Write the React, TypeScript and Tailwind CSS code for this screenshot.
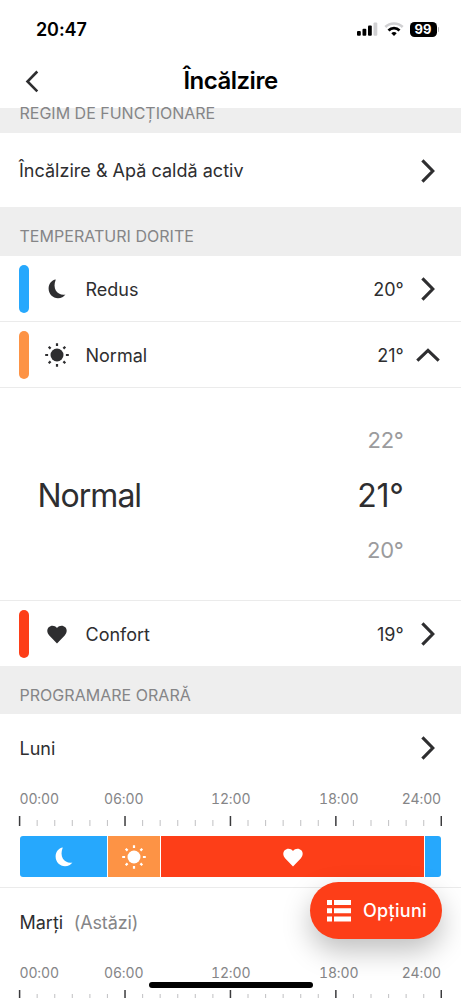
import React from 'react';
import clsx from 'clsx';

type Mode = 'redus' | 'normal' | 'confort';

const MODE_COLORS: Record<Mode, string> = {
  redus: 'bg-[#26a8fd]',
  normal: 'bg-[#fd9345]',
  confort: 'bg-[#fd3e18]',
};

const HOURS = Array.from({ length: 25 }, (_, i) => i);

const SCHEDULE: { mode: Mode; width: string; icon: boolean }[] = [
  { mode: 'redus', width: 'w-[87px]', icon: true },
  { mode: 'normal', width: 'w-[52px]', icon: true },
  { mode: 'confort', width: 'w-[263px]', icon: true },
  { mode: 'redus', width: 'flex-1', icon: false },
];

function ModeIcon({ mode }: { mode: Mode }) {
  if (mode === 'redus') {
    return (
      <svg width="24" height="24" viewBox="0 0 24 24" fill="currentColor">
        <path d="M10.800 2.600C6.500 3.200 3.600 7 3.600 11.600c0 5.400 4.200 9.700 9.400 9.700 3.200 0 5.900-1.300 7.400-3.700C13 19 6.800 12.300 10.800 2.600z" />
      </svg>
    );
  }
  if (mode === 'normal') {
    return (
      <svg width="24" height="24" viewBox="0 0 24 24" fill="currentColor">
        <circle cx="12" cy="12" r="6.500" />
        <g stroke="currentColor" strokeWidth="2.200">
          <path d="M12 .2v2.900M12 20.900v2.900M.2 12h2.900M20.900 12h2.900M3.700 3.700l1.900 1.900M18.400 18.400l1.900 1.900M3.700 20.300l1.900-1.900M18.400 5.600l1.900-1.900" />
        </g>
      </svg>
    );
  }
  return (
    <svg width="24" height="24" viewBox="0 0 24 24" fill="currentColor">
      <path d="M12 21.400l-7.700-8C1.700 10.600 1.800 7.300 3.700 5.300c2.300-2.400 6.200-2 8.300.6 2.100-2.600 6-3 8.300-.6 1.900 2 2 5.300-.6 8.100z" />
    </svg>
  );
}

function Chevron({ up = false }: { up?: boolean }) {
  return (
    <svg
      width="24"
      height="24"
      viewBox="0 0 24 24"
      fill="none"
      stroke="#2e2e30"
      strokeWidth="3.100"
      className="shrink-0"
    >
      <path d={up ? 'M1.300 17.700L12 7.300l10.700 10.400' : 'M6.400 1.300L16.800 12 6.400 22.700'} />
    </svg>
  );
}

function SectionHeader({ title, className }: { title: string; className?: string }) {
  return (
    <div className={clsx('shrink-0 bg-[#eeeeee] pl-[19.500px] pt-[9px]', className)}>
      <h2 className="text-base leading-10 tracking-[0.030px] text-[#858587]">{title}</h2>
    </div>
  );
}

interface TemperatureRowProps {
  mode: Mode;
  label: string;
  value: string;
  open?: boolean;
  className?: string;
}

function TemperatureRow({ mode, label, value, open, className }: TemperatureRowProps) {
  return (
    <div className={clsx('flex shrink-0 items-center pl-[19px] pr-[21px]', className)}>
      <div className={clsx('h-12 w-[9.500px] rounded-full', MODE_COLORS[mode])} />
      <div className="ml-[16.500px]">
        <ModeIcon mode={mode} />
      </div>
      <span className="ml-[16.500px] flex-1 pt-0.5 text-lg">{label}</span>
      <span className="mr-[12.500px] pt-0.5 text-lg tracking-[-0.1px]">{value}</span>
      <Chevron up={open} />
    </div>
  );
}

function DaySchedule({ day, note }: { day: string; note?: string }) {
  return (
    <div className="h-[174px] shrink-0 border-b border-[#ebebeb]">
      <div className="flex h-[68px] items-center pl-[19.500px] pr-[21px]">
        <span className="pt-px text-lg">{day}</span>
        {note && <span className="ml-[10.500px] pt-px text-lg tracking-[-0.1px] text-[#858587]">{note}</span>}
        <span className="flex-1" />
        {!note && <Chevron />}
      </div>
      <div className="flex h-[34px] items-center pb-0.5 pl-[19.500px] pr-5 text-[14px] tracking-[-0.150px] text-[#858587] tabular-nums">
        <span className="w-[84.500px]">00:00</span>
        <span className="w-[107px]">06:00</span>
        <span className="w-[108px]">12:00</span>
        <span className="flex-1">18:00</span>
        <span>24:00</span>
      </div>
      <svg width="461" height="11" viewBox="0 0 461 11">
        {HOURS.map((hour) => {
          const x = 19.6 + hour * 17.57;
          const major = hour % 6 === 0;
          return (
            <path
              key={hour}
              d={major ? `M${x} 0V10` : `M${x} 4V10`}
              stroke={major ? '#3b3b3d' : '#c6c6c8'}
              strokeWidth={major ? 1.5 : 1.1}
            />
          );
        })}
      </svg>
      <div className="mx-5 mt-[9px] flex h-[41px] gap-px overflow-hidden rounded-[3px] text-white">
        {SCHEDULE.map((slot, i) => (
          <div
            key={i}
            className={clsx('flex items-center justify-center', slot.width, MODE_COLORS[slot.mode])}
          >
            {slot.icon && <ModeIcon mode={slot.mode} />}
          </div>
        ))}
      </div>
    </div>
  );
}

function StatusBar() {
  return (
    <div className="flex h-[58px] items-center pl-9 pr-[22px] text-black">
      <span className="flex-1 pt-px text-[18px] font-semibold tracking-[-0.1px]">20:47</span>
      <svg width="21" height="14" viewBox="0 0 21 14" fill="currentColor">
        <rect x="0" y="9" width="3.800" height="4.800" rx="1" />
        <rect x="5.500" y="6.700" width="3.800" height="7.100" rx="1" />
        <rect x="11" y="3.500" width="3.800" height="10.300" rx="1" />
        <rect x="16.500" y="0.400" width="3.800" height="13.400" rx="1" fill="#d0d0d2" />
      </svg>
      <svg width="20" height="14" viewBox="0 0 20 14" className="ml-[6px]">
        <path d="M1.300 5a12.400 12.400 0 0 1 17.400 0" fill="none" stroke="#d0d0d2" strokeWidth="2.600" />
        <path d="M4.500 8.400a7.900 7.900 0 0 1 11 0" fill="none" stroke="currentColor" strokeWidth="2.800" />
        <path d="M7.300 11.300a4 4 0 0 1 5.400 0l-2.700 2.700z" fill="currentColor" />
      </svg>
      <span className="ml-[6px] flex h-[15px] w-[27px] items-center justify-center rounded-[4.500px] bg-black pt-px text-[13px] font-bold leading-none text-white">
        99
      </span>
      <span className="ml-px h-[5px] w-[1.500px] rounded-r-full bg-[#b5b5b7]" />
    </div>
  );
}

export default function App() {
  return (
    <div className="relative flex h-[998px] w-[461px] flex-col overflow-hidden bg-white font-['Inter',sans-serif] text-[#2e2e30]">
      <header className="h-[108px] shrink-0">
        <StatusBar />
        <div className="flex h-[46px] items-center px-5">
          <svg width="24" height="24" viewBox="0 0 24 24" fill="none" stroke="#2e2e30" strokeWidth="2.600">
            <path d="M17.300 2.500L7.500 12.500l9.800 9.900" />
          </svg>
          <h1 className="flex-1 pr-6 text-center text-2xl font-semibold tracking-[-0.5px] text-black">Încălzire</h1>
        </div>
      </header>

      <div className="flex h-[25px] shrink-0 items-start bg-[#eeeeee] pl-[19.500px]">
        <h2 className="text-base leading-[11px] text-[#858587]">REGIM DE FUNCȚIONARE</h2>
      </div>
      <div className="flex h-[74px] shrink-0 items-center pl-[19px] pr-[21px] pt-px">
        <span className="flex-1 pt-px text-lg tracking-[0.020px]">Încălzire &amp; Apă caldă activ</span>
        <Chevron />
      </div>

      <SectionHeader title="TEMPERATURI DORITE" className="h-[49px]" />
      <div className="flex shrink-0 flex-col divide-y divide-[#ebebeb]">
        <TemperatureRow mode="redus" label="Redus" value="20°" className="h-[66px]" />
        <TemperatureRow mode="normal" label="Normal" value="21°" open className="h-[66px]" />
        <div className="flex h-[213px] items-center pl-[37.500px] pr-[57.500px]">
          <span className="flex-1 pt-[3px] text-[32px] tracking-[-1px]">Normal</span>
          <div className="flex flex-col items-end pt-0.5 text-[22px] tracking-[-0.300px] text-[#9b9b9d]">
            <span className="h-[55px] leading-[55px]">22°</span>
            <span className="h-[55px] text-[32px] leading-[55px] text-[#2e2e30]">21°</span>
            <span className="h-[55px] leading-[55px]">20°</span>
          </div>
        </div>
        <TemperatureRow mode="confort" label="Confort" value="19°" className="h-[65px]" />
      </div>

      <SectionHeader title="PROGRAMARE ORARĂ" className="h-12" />
      <DaySchedule day="Luni" />
      <DaySchedule day="Marți" note="(Astăzi)" />

      <button className="absolute left-[310px] top-[882px] flex h-[57px] w-[132px] items-center rounded-full bg-[#fd3e18] pl-[17px] text-lg font-medium tracking-[0.300px] text-white shadow-[0_12px_28px_rgba(0,0,0,0.25)]">
        <svg width="24" height="22" viewBox="0 0 24 22" fill="currentColor">
          <path d="M0 0h5v5H0zM7 0h17v5H7zM0 8.300h5v5H0zM7 8.300h17v5H7zM0 16.600h5v5H0zM7 16.600h17v5H7z" />
        </svg>
        <span className="ml-3">Opțiuni</span>
      </button>
      <div className="absolute left-[149px] top-[982px] h-[6px] w-[164px] rounded-full bg-black" />
    </div>
  );
}
